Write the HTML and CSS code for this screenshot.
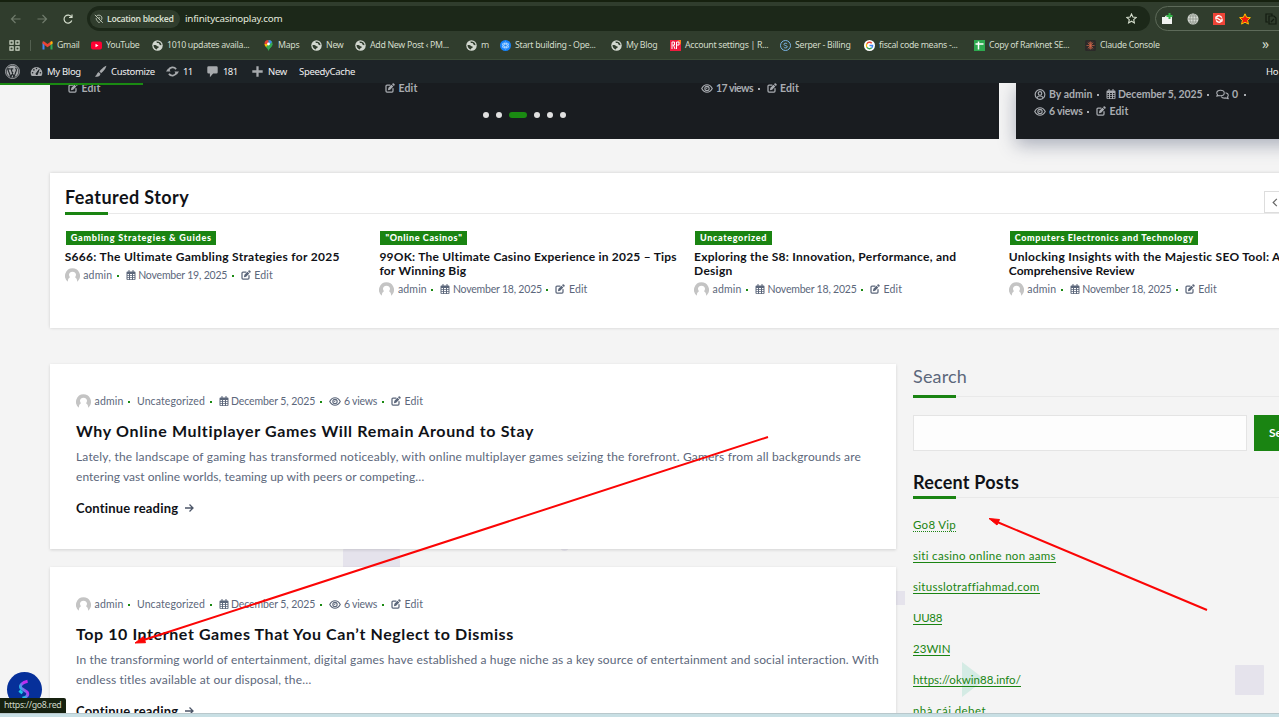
FILE: index.html
```html
<!DOCTYPE html>
<html lang="en">
<head>
<meta charset="utf-8">
<title>infinitycasinoplay.com</title>
<link rel="stylesheet" href="styles.css">
</head>
<body>
<svg class="defs" aria-hidden="true">
  <symbol id="edit" viewBox="0 0 20 20"><path d="M10 4H4a2 2 0 0 0-2 2v10a2 2 0 0 0 2 2h10a2 2 0 0 0 2-2v-5" fill="none" stroke="currentColor" stroke-width="2.500" stroke-linecap="round"/><path d="M15.2 1.2a1.8 1.8 0 0 1 2.6 0l1 1a1.8 1.8 0 0 1 0 2.600l-1.200 1.200-3.600-3.600zM13 3.400l3.600 3.600-6.300 6.300-4.500 1 1-4.600z" fill="currentColor"/></symbol>
  <symbol id="cal" viewBox="0 0 20 20"><path fill="currentColor" fill-rule="evenodd" d="M5 0h2v3h6V0h2v3h2a2 2 0 0 1 2 2v13a2 2 0 0 1-2 2H3a2 2 0 0 1-2-2V5a2 2 0 0 1 2-2h2zM3 8v2.500h3V8zm5 0v2.500h4V8zm6 0v2.500h3V8zM3 12v2.500h3V12zm5 0v2.500h4V12zm6 0v2.500h3V12zM3 16v2.300h3V16zm5 0v2.300h4V16zm6 0v2.300h3V16z"/></symbol>
  <symbol id="eye" viewBox="0 0 24 20"><path d="M1.500 10C4 5 8 2.500 12 2.500S20 5 22.500 10C20 15 16 17.500 12 17.500S4 15 1.500 10z" fill="none" stroke="currentColor" stroke-width="2.300"/><circle cx="12" cy="10" r="4.300" fill="none" stroke="currentColor" stroke-width="2.200"/><path d="M12 7.500v2.500H9.500" fill="none" stroke="currentColor" stroke-width="1.500"/></symbol>
  <symbol id="user" viewBox="0 0 20 20"><g fill="none" stroke="currentColor" stroke-width="2.100"><circle cx="10" cy="10" r="8.800"/><circle cx="10" cy="8" r="3.200"/><path d="M4.500 16c1-2.800 3-3.300 5.500-3.300s4.500.5 5.500 3.300"/></g></symbol>
  <symbol id="chat" viewBox="0 0 26 20"><g fill="none" stroke="currentColor" stroke-width="2.200" stroke-linejoin="round"><path d="M9 1.500c4.500 0 7.500 2.400 7.500 5.500S13.500 12.500 9 12.500c-1.200 0-2.300-.2-3.300-.5L1.500 13.500 3 10.300C2 9.400 1.500 8.300 1.500 7 1.500 3.900 4.500 1.500 9 1.500z"/><path d="M19 6.500c3.300.6 5.500 2.600 5.500 5.200 0 1.300-.5 2.400-1.500 3.300l1.500 3.500-4.300-1.700c-4 1-8.200 0-9.700-2.600"/></g></symbol>
  <symbol id="avatar" viewBox="0 0 30 27"><path d="M15 0a15 15 0 0 1 12 24c-1 1.500-2.500 3-3 3 1-5-2-8-4-9 4-4 2-11-5-11S6 14 10 18c-2 1-5 4-4 9A15 15 0 0 1 15 0z" fill="#c4c4c4"/></symbol>
  <symbol id="globe" viewBox="0 0 22 22"><circle cx="11" cy="11" r="10.500" fill="#d2d7cf"/><path d="M3 10c3 0 5-1 6.500 1.500s4 0 4 2.500-3.500 1-3.500 5C6 18 3 15 3 10zM9 3c-.5 2.500 2 3.500 3 3s2 0 2.500 2 3 3 4.500 2C19 6 15 2.500 9 3z" fill="#303d2d"/></symbol>
</svg>

<header class="chrome">
  <div class="tabs"></div>
  <div class="toolbar">
    <svg class="nav-btn dim" viewBox="0 0 12 12"><path d="M10.500 6h-9M5.500 2 1.500 6l4 4"/></svg>
    <svg class="nav-btn dim" viewBox="0 0 12 12"><path d="M1.500 6h9M6.500 2l4 4-4 4"/></svg>
    <svg class="nav-btn" viewBox="0 0 12 12"><path d="M9.800 7.500A4 4 0 1 1 9.500 4M10 1.500v3H7"/></svg>
    <div class="omnibox">
      <div class="chip"><svg viewBox="0 0 12 12"><path d="M3 2.500C4.500.7 9.500 1 9.500 5c0 1-.5 2-1 2.700M7.300 9.200 6 10.500C4.500 9 2.500 7 2.500 5M1 1l9.500 9.500M5.500 4.200a1 1 0 0 1 1.400 1.300"/></svg><span class="t-loc">Location blocked</span></div>
      <span class="t-url">infinitycasinoplay.com</span>
      <svg class="star" viewBox="0 0 20 20"><path d="m10 1.800 2.500 5.600 6 .6-4.500 4 1.300 6L10 14.900 4.700 18 6 12 1.500 8l6-.6z"/></svg>
    </div>
    <div class="extensions">
      <svg viewBox="0 0 12 12"><path d="M1 4h3c0-2 3-2 3 0h4v7H1z" fill="#f1f3f1"/><path d="M8.500 0v6M5.500 3h6" stroke="#35b54a" stroke-width="2"/></svg>
      <svg viewBox="0 0 12 12"><circle cx="6" cy="6" r="5.500" fill="#d7dbd5"/><g fill="none" stroke="#848c82" stroke-width=".7"><path d="M.5 6h11M1.500 3h9M1.500 9h9M6 .5v11"/><ellipse cx="6" cy="6" rx="3" ry="5.500"/></g></svg>
      <svg viewBox="0 0 12 12"><path d="M0 0h12v12H0z" fill="#ee4437"/><path d="M8.700 4.800A3 3 0 0 0 3.500 4M3.300 7.200A3 3 0 0 0 8.500 8M3 6.500V3.500M9 5.500v3M4 5l4 2.500" fill="none" stroke="#fff" stroke-width="1.400"/></svg>
      <svg viewBox="0 0 12 12"><path d="m6 .8 1.600 3.500 3.800.4-2.800 2.600.8 3.800L6 9.200l-3.400 1.900.8-3.800L.6 4.700l3.800-.4z" fill="#f21a12" stroke="#ffc400" stroke-width="1"/></svg>
      <svg viewBox="0 0 12 12"><path d="M3 9H1V1h6v2M4 3h5l2 2v6H4zM6 9l3-3" fill="none" stroke="#131c11" stroke-width="1.200"/></svg>
    </div>
  </div>
  <nav class="bookmarks">
    <svg class="apps" viewBox="0 0 12 12"><path d="M1 1h3.500v3.500H1zM7.500 1H11v3.500H7.500zM1 7.500h3.500V11H1zM7.500 7.500H11V11H7.500z"/></svg>
    <i class="sep"></i>
    <a><svg viewBox="0 0 22 22"><path d="M1 19V5l4 3v11z" fill="#4285f4"/><path d="M17 8l4-3v14h-4z" fill="#34a853"/><path d="M1 5c0-3 2-3 4-1.500L11 8l6-4.500C19 2 21 2 21 5v2l-10 7.500L1 7z" fill="#ea4335"/><path d="M17 3.500C19 2 21 2 21 5v2l-4 3z" fill="#fbbc04"/></svg><span>Gmail</span></a>
    <a><svg viewBox="0 0 22 22"><rect y="3" width="22" height="16" rx="4" fill="#f03"/><path d="m9 7.500 6 3.500-6 3.500z" fill="#fff"/></svg><span>YouTube</span></a>
    <a><svg><use href="#globe"/></svg><span>1010 updates availa...</span></a>
    <a><svg viewBox="0 0 22 22"><path d="M11 0a8 8 0 0 1 8 8c0 6-6 7-8 14z" fill="#34a853"/><path d="M11 0a8 8 0 0 0-8 8l8 0z" fill="#ea4335"/><path d="M3 8c0 3 2 5 4 7l5-7z" fill="#fbbc04"/><path d="M11 22c-1-4-3-5-5-8l6-6 7 0c0 6-6 7-8 14z" fill="#34a853"/><path d="M11 0a8 8 0 0 1 7 4l-6 6z" fill="#4285f4"/><circle cx="11" cy="8" r="2.800" fill="#fff"/></svg><span>Maps</span></a>
    <a><svg><use href="#globe"/></svg><span>New</span></a>
    <a><svg><use href="#globe"/></svg><span>Add New Post ‹ PM...</span></a>
    <a><svg><use href="#globe"/></svg><span>m</span></a>
    <a><svg viewBox="0 0 22 22"><circle cx="11" cy="11" r="11" fill="#1683fb"/><g fill="none" stroke="#b8dcff" stroke-width="1.400"><ellipse cx="11" cy="11" rx="3" ry="7"/><ellipse cx="11" cy="11" rx="3" ry="7" transform="rotate(60 11 11)"/><ellipse cx="11" cy="11" rx="3" ry="7" transform="rotate(120 11 11)"/></g></svg><span>Start building - Ope...</span></a>
    <a><svg><use href="#globe"/></svg><span>My Blog</span></a>
    <a><svg viewBox="0 0 22 22"><path d="M0 0h22v22H0z" fill="#ee1c3e"/><path d="M16 0h6v10z" fill="#ff7a1a"/><path d="M4 18V4h5v6H5m2 0 3 8M13 18V4h5v6h-5" fill="none" stroke="#fff" stroke-width="2"/></svg><span>Account settings | R...</span></a>
    <a><svg viewBox="0 0 22 22"><g fill="none" stroke="#7ab5e6" stroke-width="2"><circle cx="11" cy="11" r="10"/><path d="M14.500 8C13 5.500 7.500 6 8 9s6.500 1.500 6.500 4.500S8.500 16.500 7.500 14"/></g></svg><span>Serper - Billing</span></a>
    <a><svg viewBox="0 0 22 22"><circle cx="11" cy="11" r="11" fill="#fff"/><g fill="none" stroke-width="2.800"><path d="M5.800 7.500A6.200 6.200 0 0 1 15.500 6.500" stroke="#ea4335"/><path d="M5.800 14.500a6.200 6.200 0 0 1 0-7" stroke="#fbbc04"/><path d="M15.500 15.500a6.200 6.200 0 0 1-9.700-1" stroke="#34a853"/><path d="M11 11h6.200a6 6 0 0 1-1.700 4.500" stroke="#4285f4"/></g></svg><span>fiscal code means -...</span></a>
    <a><svg viewBox="0 0 22 22"><path d="M0 0h22v22H0z" fill="#2da94f"/><path d="M9 3v16M3 8h16" stroke="#fff" stroke-width="3"/></svg><span>Copy of Ranknet SE...</span></a>
    <a><svg viewBox="0 0 22 22"><rect width="22" height="22" rx="3" fill="#2b2a29"/><path d="M11 3v16M3 11h16M5.500 5.500l11 11M16.500 5.500l-11 11M8 3.500l6 15M14 3.500l-6 15" stroke="#d9694a" stroke-width="1.300"/></svg><span>Claude Console</span></a>
    <span class="more">»</span>
  </nav>
</header>

<nav class="adminbar">
  <a><svg viewBox="0 0 20 20"><circle cx="10" cy="10" r="9.300" fill="none" stroke="#a7aaad" stroke-width="1.300"/><circle cx="10" cy="10" r="7.900" fill="#a7aaad"/><path d="M3.500 6.500 8 18M8 6.500 12 18M3 6.500h3.500M7 6.500h4M8 17.500l2.500-7M12 17.500l3.200-9c.3-1.500-1-2-.8-3.500" fill="none" stroke="#1d2327" stroke-width="1.500"/></svg></a>
  <a><svg viewBox="0 0 20 20"><path d="M10 3a9 9 0 0 0-9 9c0 2 .5 3.500 1.500 5h15c1-1.500 1.500-3 1.500-5a9 9 0 0 0-9-9z" fill="#a7aaad"/><path d="M9 14l5-7-3 8z" fill="#1d2327" stroke="#1d2327" stroke-width="1.500"/><g fill="#1d2327"><circle cx="4" cy="12" r="1.200"/><circle cx="6" cy="7.500" r="1.200"/><circle cx="10" cy="5.500" r="1.200"/><circle cx="16" cy="12" r="1.200"/></g></svg><span>My Blog</span></a>
  <a><svg viewBox="0 0 20 20"><path d="M19 1c-2 0-9 6-10.500 9l2.500 2.500C14 10.500 19 4 19 1zM7.500 11C4.500 11 5 15 1.500 17.500c4 1.500 8 0 8.500-4z" fill="#a7aaad"/></svg><span>Customize</span></a>
  <a><svg viewBox="0 0 20 20"><path d="M4 8a6.500 6.500 0 0 1 11.500-1.500M16 12a6.500 6.500 0 0 1-11.500 1.500" fill="none" stroke="#a7aaad" stroke-width="2.800"/><path d="M13 10h7l-3.500 5zM7 10H0l3.500-5z" fill="#a7aaad"/></svg><span class="num">11</span></a>
  <a><svg viewBox="0 0 20 20"><path d="M4 2h12a2 2 0 0 1 2 2v7a2 2 0 0 1-2 2h-5l-5 6v-6H4a2 2 0 0 1-2-2V4a2 2 0 0 1 2-2z" fill="#a7aaad"/></svg><span class="num">181</span></a>
  <a><svg viewBox="0 0 20 20"><path d="M10 2v16M2 10h16" stroke="#a7aaad" stroke-width="3.500"/></svg><span>New</span></a>
  <a><span>SpeedyCache</span></a>
  <a class="howdy">Ho</a>
</nav>

<main class="page">
  <div class="shape block-a"></div><div class="shape dot-a"></div><div class="shape block-b"></div><div class="shape block-c"></div>
  <svg class="triangle" viewBox="0 0 23 35"><path d="M0 0 23 17.500 0 35z"/></svg>
  <div class="progress"></div>

  <section class="hero">
    <div class="slider">
      <div class="slide-row">
        <div class="meta"><svg class="ic"><use href="#edit"/></svg><span class="m-edit">Edit</span></div>
        <div class="meta"><svg class="ic"><use href="#edit"/></svg><span class="m-edit">Edit</span></div>
        <div class="meta"><svg class="ic-eye"><use href="#eye"/></svg><span class="m-views17">17 views</span><b class="dot"></b><svg class="ic"><use href="#edit"/></svg><span class="m-edit">Edit</span></div>
      </div>
      <div class="pager"><i></i><i></i><i class="on"></i><i></i><i></i><i></i></div>
    </div>
    <div class="side-post">
      <div class="meta"><svg class="ic-eye"><use href="#user"/></svg><span class="m-by">By admin</span><b class="dot"></b><svg class="ic"><use href="#cal"/></svg><span class="m-dec">December 5, 2025</span><b class="dot"></b><svg class="ic-chat"><use href="#chat"/></svg><span class="m-zero">0</span><b class="dot"></b></div>
      <div class="meta"><svg class="ic-eye"><use href="#eye"/></svg><span class="m-views">6 views</span><b class="dot"></b><svg class="ic"><use href="#edit"/></svg><span class="m-edit">Edit</span></div>
    </div>
  </section>

  <section class="featured">
    <div class="heading"><h2 class="t-featured">Featured Story</h2></div>
    <div class="arrow-btn"><svg viewBox="0 0 8 12"><path d="M6 2 2 6l4 4"/></svg></div>
    <div class="stories">
      <article>
        <span class="tag g1">Gambling Strategies &amp; Guides</span>
        <h3 class="s1">S666: The Ultimate Gambling Strategies for 2025</h3>
        <div class="meta"><svg class="av"><use href="#avatar"/></svg><span class="m-admin">admin</span><b class="dot"></b><svg class="ic"><use href="#cal"/></svg><span class="m-nov">November 19, 2025</span><b class="dot"></b><svg class="ic"><use href="#edit"/></svg><span class="m-edit">Edit</span></div>
      </article>
      <article>
        <span class="tag g2">"Online Casinos"</span>
        <h3 class="s2">99OK: The Ultimate Casino Experience in 2025 – Tips<br>for Winning Big</h3>
        <div class="meta"><svg class="av"><use href="#avatar"/></svg><span class="m-admin">admin</span><b class="dot"></b><svg class="ic"><use href="#cal"/></svg><span class="m-nov">November 18, 2025</span><b class="dot"></b><svg class="ic"><use href="#edit"/></svg><span class="m-edit">Edit</span></div>
      </article>
      <article>
        <span class="tag g3">Uncategorized</span>
        <h3 class="s4">Exploring the S8: Innovation, Performance, and<br>Design</h3>
        <div class="meta"><svg class="av"><use href="#avatar"/></svg><span class="m-admin">admin</span><b class="dot"></b><svg class="ic"><use href="#cal"/></svg><span class="m-nov">November 18, 2025</span><b class="dot"></b><svg class="ic"><use href="#edit"/></svg><span class="m-edit">Edit</span></div>
      </article>
      <article>
        <span class="tag g4">Computers Electronics and Technology</span>
        <h3 class="s6">Unlocking Insights with the Majestic SEO Tool: A<br><span class="s7">Comprehensive Review</span></h3>
        <div class="meta"><svg class="av"><use href="#avatar"/></svg><span class="m-admin">admin</span><b class="dot"></b><svg class="ic"><use href="#cal"/></svg><span class="m-nov">November 18, 2025</span><b class="dot"></b><svg class="ic"><use href="#edit"/></svg><span class="m-edit">Edit</span></div>
      </article>
    </div>
  </section>

  <div class="columns">
    <div class="posts">
      <article class="post">
        <div class="meta"><svg class="av"><use href="#avatar"/></svg><span class="m-admin">admin</span><b class="dot"></b><span class="m-cat">Uncategorized</span><b class="dot"></b><svg class="ic"><use href="#cal"/></svg><span class="m-dec">December 5, 2025</span><b class="dot"></b><svg class="ic-eye"><use href="#eye"/></svg><span class="m-views">6 views</span><b class="dot"></b><svg class="ic"><use href="#edit"/></svg><span class="m-edit">Edit</span></div>
        <h2 class="p1">Why Online Multiplayer Games Will Remain Around to Stay</h2>
        <p class="l1">Lately, the landscape of gaming has transformed noticeably, with online multiplayer games seizing the forefront. Gamers from all backgrounds are<br><span class="l2">entering vast online worlds, teaming up with peers or competing…</span></p>
        <div class="read"><span>Continue reading</span><svg viewBox="0 0 10 10"><path d="M1 5h8M5.500 1.500 9 5 5.500 8.500"/></svg></div>
      </article>
      <article class="post">
        <div class="meta"><svg class="av"><use href="#avatar"/></svg><span class="m-admin">admin</span><b class="dot"></b><span class="m-cat">Uncategorized</span><b class="dot"></b><svg class="ic"><use href="#cal"/></svg><span class="m-dec">December 5, 2025</span><b class="dot"></b><svg class="ic-eye"><use href="#eye"/></svg><span class="m-views">6 views</span><b class="dot"></b><svg class="ic"><use href="#edit"/></svg><span class="m-edit">Edit</span></div>
        <h2 class="p2">Top 10 Internet Games That You Can’t Neglect to Dismiss</h2>
        <p class="l3">In the transforming world of entertainment, digital games have established a huge niche as a key source of entertainment and social interaction. With<br>endless titles available at our disposal, the…</p>
        <div class="read"><span>Continue reading</span><svg viewBox="0 0 10 10"><path d="M1 5h8M5.500 1.500 9 5 5.500 8.500"/></svg></div>
      </article>
    </div>
    <aside>
      <div class="heading light"><h2 class="t-search">Search</h2></div>
      <form class="search"><div class="field"></div><div class="btn">Search</div></form>
      <div class="heading recent"><h2 class="t-recent">Recent Posts</h2></div>
      <ul>
        <li><a class="k1 hover">Go8 Vip</a></li>
        <li><a class="k2">siti casino online non aams</a></li>
        <li><a class="k3">situsslotraffiahmad.com</a></li>
        <li><a class="k4">UU88</a></li>
        <li><a class="k5">23WIN</a></li>
        <li><a class="k6">https://okwin88.info/</a></li>
        <li><a class="k7">nhà cái debet</a></li>
      </ul>
    </aside>
  </div>
  <div class="badge"><svg viewBox="0 0 34 34"><defs><linearGradient id="g" x1="1" y1="0" x2="0" y2="1"><stop offset=".3" stop-color="#c02bf0"/><stop offset=".7" stop-color="#18c8e8"/></linearGradient></defs><path d="M20 9c-5 1-8 4-6.500 6.500l6 4c2 3-1 5.500-4.500 6M12 18l3 2.500" fill="none" stroke="url(#g)" stroke-width="2.800"/></svg></div>
  <div class="status">https://go8.red</div>
</main>
<svg class="arrows" viewBox="0 0 1279 717"><path class="line" d="M768 437 142 640.500M1207 610 996 521.500"/><path class="tip" d="m135 643 8.500-6.500 2 6.200zM989 518.500l10.500 1-2.500 5.500z"/></svg>
<div class="taskbar"></div>
</body>
</html>
```
FILE: styles.css
```css
* { box-sizing: border-box; }
body { margin: 0; width: 1279px; height: 717px; overflow: hidden; display: flex; flex-direction: column; background: #f4f4f4; font-family: Lato, "Liberation Sans", sans-serif; }
h2, h3, p, ul { margin: 0; padding: 0; }
ul { list-style: none; }
svg { display: block; flex: none; }
.defs { position: absolute; width: 0; height: 0; }

/* browser chrome */
.chrome { height: 60px; background: #303d2d; font-family: "Noto Sans", sans-serif; color: #d3dccb; border-bottom: 1px solid #3b4a37; flex: none; }
.tabs { height: 2px; background: #16210f; }
.toolbar { height: 33px; display: flex; align-items: center; padding-left: 10px; }
.nav-btn { width: 12px; height: 12px; margin-right: 14px; fill: none; stroke: #d3dccb; stroke-width: 1.2; }
.nav-btn.dim { stroke: #6f7b6b; }
.omnibox { width: 1063px; height: 25px; flex: none; margin-left: -1px; border-radius: 13px; background: #1c2819; display: flex; align-items: center; padding: 0 13px 0 3px; }
.chip { width: 90px; height: 18px; flex: none; border-radius: 9px; background: #303d2d; display: flex; align-items: center; padding-left: 4px; font-size: 8.700px; font-weight: 600; letter-spacing: -.34px; }
.chip svg { width: 10px; height: 10px; margin-right: 3px; fill: none; stroke: #d3dccb; }
.t-loc, .t-url { white-space: nowrap; }
.t-url { margin-left: 5px; font-size: 9.800px; letter-spacing: -.21px; color: #e4eadf; }
.star { width: 11px; height: 11px; margin-left: auto; fill: none; stroke: #d3dccb; stroke-width: 2; }
.extensions { width: 140px; height: 25px; flex: none; margin-left: 5px; padding-left: 5px; border: 1px solid #5d6a59; border-radius: 13px; display: flex; align-items: center; gap: 14px; }
.extensions svg { width: 12px; height: 12px; }
.bookmarks { height: 20px; display: grid; align-items: center; grid-template-columns: 21px 12px 49px 61px 111px 48px 44px 111px 34px 111px 59px 110px 84px 110px 111px 177px 20px; padding-left: 9px; font-size: 8.800px; letter-spacing: -.31px; }
.bookmarks a { display: flex; align-items: center; gap: 4px; white-space: nowrap; }
.bookmarks a svg { width: 11px; height: 11px; }
.apps { width: 11px; height: 11px; fill: none; stroke: #d3dccb; stroke-width: 1.2; }
.sep { width: 1px; height: 11px; background: #536050; }
.more { font-size: 14px; line-height: 10px; padding-bottom: 3px; }

/* admin bar */
.adminbar { height: 23px; flex: none; background: #1d2327; color: #f0f0f1; display: grid; grid-template-columns: 25px 64px 72px 40px 45px 48px 967px 20px; padding-left: 5px; align-items: center; font: 9.500px "Noto Sans", sans-serif; letter-spacing: -.33px; }
.adminbar a { display: flex; align-items: center; gap: 4px; white-space: nowrap; }
.adminbar svg { width: 13px; height: 13px; }
.adminbar a:first-child svg { width: 15px; height: 15px; }
.num { letter-spacing: -.6px; }

/* page */
.page { position: relative; height: 630px; overflow: hidden; flex: none; }
.shape { position: absolute; background: #e5e3ec; }
.block-a { left: 343px; top: 464px; width: 57px; height: 30px; border-radius: 4px; }
.dot-a { left: 560px; top: 459px; width: 9px; height: 9px; border-radius: 5px; }
.block-b { left: 890px; top: 508px; width: 15px; height: 14px; }
.block-c { left: 1235px; top: 582px; width: 29px; height: 30px; border-radius: 1px; }
.triangle { position: absolute; left: 962px; top: 579px; width: 23px; height: 35px; fill: #d4ebe4; }
.progress { position: absolute; left: 0; top: 0; width: 143px; height: 2px; background: #1a8a12; z-index: 2; }

.meta { display: flex; align-items: center; height: 14px; font-size: 10.500px; color: #5c677b; white-space: nowrap; }
.meta span { flex: none; }
.ic { width: 10px; height: 10px; margin-right: 2.500px; }
.ic-eye { width: 12px; height: 11px; margin-right: 3px; }
.ic-chat { width: 13px; height: 11px; margin-right: 3px; }
.av { width: 15px; height: 14px; margin-right: 3.500px; }
.dot { width: 2px; height: 2px; margin: 1px 7px 0 4.500px; background: #1a8a12; flex: none; }
.m-edit { width: 19px; margin-left: 1px; letter-spacing: .15px; }
.m-admin { width: 29px; letter-spacing: .17px; }
.m-nov { width: 89px; letter-spacing: -.2px; }
.m-dec { width: 84.500px; letter-spacing: -.1px; }
.m-views { width: 33.500px; letter-spacing: -.22px; }
.m-views17 { width: 37px; letter-spacing: -.53px; }
.m-by { width: 43px; letter-spacing: 0; }
.m-cat { width: 68px; letter-spacing: .1px; }
.m-zero { width: 7px; }

.hero { display: flex; gap: 17px; height: 56px; padding-left: 50px; flex: none; }
.hero .meta { color: #a9acb1; font-weight: 700; }
.hero .dot { background: #a9acb1; }
.slider { width: 949px; flex: none; background: #191c20; padding: 0 0 0 18px; }
.slide-row { display: grid; grid-template-columns: 317px 316px 200px; height: 12px; align-content: end; }
.pager { display: flex; align-items: center; gap: 7px; padding: 17px 0 0 415px; }
.pager i { width: 6px; height: 6px; border-radius: 3px; background: #e0e0e0; }
.pager .on { width: 18px; background: #1a8a12; }
.side-post { width: 300px; flex: none; background: #191c20; padding: 4px 0 0 18px; box-shadow: 0 6px 18px rgba(60,70,100,.4); }
.side-post .meta { margin-bottom: 3px; }

.featured { position: relative; width: 1300px; height: 155px; margin: 34px 0 0 50px; padding: 15px 0 0 15px; background: #fff; box-shadow: 0 0 3px rgba(0,0,0,.16); }
.heading { height: 26px; border-bottom: 1px solid #e9e9e9; position: relative; }
.heading::after { content: ""; position: absolute; left: 0; bottom: -2px; width: 43px; height: 3px; background: #1a8412; }
.heading h2 { font-size: 18px; line-height: 19px; color: #101217; white-space: nowrap; }
.heading.light h2 { font-weight: 400; color: #5c677b; }
.t-featured { letter-spacing: .43px; }
.t-search { letter-spacing: .18px; }
.t-recent { letter-spacing: .22px; }
.arrow-btn { position: absolute; left: 1214px; top: 18px; width: 22px; height: 22px; border: 1px solid #ddd; background: #fff; padding: 5px 0 0 6px; }
.arrow-btn svg { width: 8px; height: 11px; fill: none; stroke: #666; stroke-width: 1.3; }
.stories { display: grid; grid-template-columns: repeat(4, 314.700px); margin: 17px 0 0 -.300px; }
.tag { display: block; height: 14px; margin-left: 1px; padding-left: 5px; background: #1a8412; color: #fff; font-size: 9px; line-height: 13px; font-weight: 900; white-space: nowrap; letter-spacing: .65px; }
.g1 { width: 150px; letter-spacing: .78px; } .g2 { width: 87px; letter-spacing: .6px; } .g3 { width: 77px; } .g4 { width: 188px; }
.stories h3 { margin: 5px 0 4px; font-size: 12px; line-height: 14.200px; color: #101217; white-space: nowrap; }
.s1 { letter-spacing: .295px; }
.s2 { letter-spacing: .223px; }
.s4 { letter-spacing: .264px; }
.s6 { letter-spacing: .286px; }
.s7 { letter-spacing: .054px; }

.columns { display: flex; gap: 17px; margin: 36px 0 0 50px; }
.posts { width: 846px; flex: none; display: flex; flex-direction: column; gap: 18px; }
.post { position: relative; height: 185px; padding: 30px 0 0 26px; background: #fff; box-shadow: 0 1px 3px rgba(0,0,0,.14); }
.post h2 { margin-top: 12px; font-size: 16px; line-height: 22px; color: #101217; white-space: nowrap; }
.post .p1 { letter-spacing: .655px; }
.post .p2 { letter-spacing: .585px; }
.post p { margin-top: 5px; font-size: 12px; line-height: 19.500px; color: #5c677b; white-space: nowrap; }
.l1 { letter-spacing: .173px; }
.l2 { letter-spacing: .042px; }
.l3 { letter-spacing: .155px; }
.read { display: flex; align-items: center; gap: 6px; margin-top: 13px; font-size: 13px; line-height: 18px; font-weight: 700; letter-spacing: .194px; color: #101217; }
.read svg { width: 10px; height: 10px; fill: none; stroke: #4c5668; stroke-width: 1.300; }
aside { position: relative; width: 400px; flex: none; }
aside .heading { height: 33px; padding-top: 3px; }
aside .heading.recent { height: 29px; padding-top: 4px; }
.search { display: flex; gap: 7px; margin: 18px 0 18px; }
.field { width: 334px; height: 36px; flex: none; background: #fdfdfd; border: 1px solid #e4e4e4; }
.btn { width: 80px; height: 36px; flex: none; padding-left: 15px; background: #1a8412; color: #fff; font-size: 12px; font-weight: 700; line-height: 35px; }
aside ul { padding-top: 17px; font-size: 11.500px; }
aside li { height: 31px; line-height: 20px; }
aside li a { display: inline-block; height: 17px; border-bottom: 1px solid #1a8412; color: #1a8412; white-space: nowrap; }
aside li .hover { border-bottom-style: dotted; }
.k1 { letter-spacing: .28px; }
.k2 { letter-spacing: .31px; }
.k3 { letter-spacing: .29px; }
.k4 { letter-spacing: -.3px; }
.k5 { letter-spacing: .04px; }
.k6 { letter-spacing: .02px; }
.k7 { letter-spacing: .42px; }

.badge { position: absolute; left: 7px; top: 589px; width: 35px; height: 35px; border-radius: 50%; background: #06309a; }
.status { position: absolute; left: 0; top: 615px; width: 66px; height: 15px; border-radius: 0 2px 0 0; background: #16210f; color: #cfd8c8; font: 8.800px/15px "Noto Sans", sans-serif; letter-spacing: -.32px; padding-left: 4px; white-space: nowrap; }
.arrows { position: absolute; left: 0; top: 0; width: 1279px; height: 717px; }
.line { fill: none; stroke: #fb0505; stroke-width: 2; }
.tip { fill: #fb0505; stroke: #fb0505; }
.taskbar { height: 4px; flex: none; background: #c8dfe4; border-top: 1px solid #b9c8cc; }
```
